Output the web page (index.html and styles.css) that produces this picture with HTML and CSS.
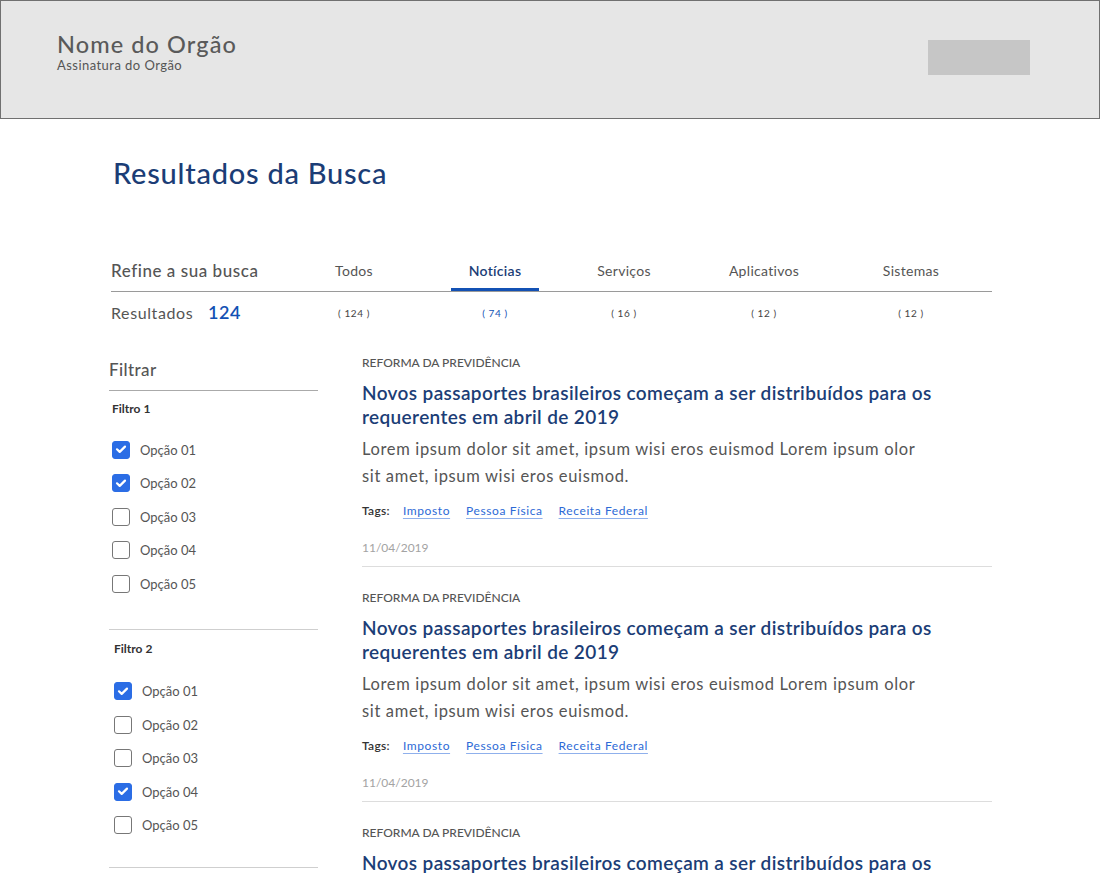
FILE: index.html
```html
<!DOCTYPE html>
<html lang="pt-BR">
<head>
<meta charset="utf-8">
<title>Resultados da Busca</title>
<link rel="stylesheet" href="styles.css">
</head>
<body>
<header class="topbar">
  <div class="brand">
    <div class="brand-name">Nome do Orgão</div>
    <div class="brand-sub">Assinatura do Orgão</div>
  </div>
  <div class="logo-box"></div>
</header>

<main class="page">
  <h1 class="page-title">Resultados da Busca</h1>

  <section class="refine">
    <div class="refine-row refine-head">
      <div class="refine-label">Refine a sua busca</div>
      <div class="tab"><span class="tab-text">Todos</span></div>
      <div class="tab"><span class="tab-text active">Notícias</span></div>
      <div class="tab"><span class="tab-text">Serviços</span></div>
      <div class="tab"><span class="tab-text">Aplicativos</span></div>
      <div class="tab"><span class="tab-text">Sistemas</span></div>
    </div>
    <div class="refine-row refine-counts">
      <div class="results-label">Resultados <span class="results-num">124</span></div>
      <div class="count">( 124 )</div>
      <div class="count active">( 74 )</div>
      <div class="count">( 16 )</div>
      <div class="count">( 12 )</div>
      <div class="count">( 12 )</div>
    </div>
  </section>

  <div class="content">
    <aside class="sidebar">
      <div class="filter-title">Filtrar</div>

      <div class="filter-group">
        <div class="group-title">Filtro 1</div>
        <ul class="options">
          <li class="option"><span class="box checked"><svg viewBox="0 0 18 18"><path d="M5 9.3l2.7 2.6L13 6.6"/></svg></span>Opção 01</li>
          <li class="option"><span class="box checked"><svg viewBox="0 0 18 18"><path d="M5 9.3l2.7 2.6L13 6.6"/></svg></span>Opção 02</li>
          <li class="option"><span class="box"></span>Opção 03</li>
          <li class="option"><span class="box"></span>Opção 04</li>
          <li class="option"><span class="box"></span>Opção 05</li>
        </ul>
      </div>

      <div class="filter-group group-2">
        <div class="group-title">Filtro 2</div>
        <ul class="options">
          <li class="option"><span class="box checked"><svg viewBox="0 0 18 18"><path d="M5 9.3l2.7 2.6L13 6.6"/></svg></span>Opção 01</li>
          <li class="option"><span class="box"></span>Opção 02</li>
          <li class="option"><span class="box"></span>Opção 03</li>
          <li class="option"><span class="box checked"><svg viewBox="0 0 18 18"><path d="M5 9.3l2.7 2.6L13 6.6"/></svg></span>Opção 04</li>
          <li class="option"><span class="box"></span>Opção 05</li>
        </ul>
      </div>
    </aside>

    <section class="results">
      <article class="result">
        <div class="category">REFORMA DA PREVIDÊNCIA</div>
        <h2 class="result-title">Novos passaportes brasileiros começam a ser distribuídos para os requerentes em abril de 2019</h2>
        <p class="result-desc">Lorem ipsum dolor sit amet, ipsum wisi eros euismod Lorem ipsum olor sit amet, ipsum wisi eros euismod.</p>
        <div class="tags"><span class="tags-label">Tags:</span><a class="tag">Imposto</a><a class="tag">Pessoa Física</a><a class="tag">Receita Federal</a></div>
        <div class="date">11/04/2019</div>
      </article>
      <article class="result">
        <div class="category">REFORMA DA PREVIDÊNCIA</div>
        <h2 class="result-title">Novos passaportes brasileiros começam a ser distribuídos para os requerentes em abril de 2019</h2>
        <p class="result-desc">Lorem ipsum dolor sit amet, ipsum wisi eros euismod Lorem ipsum olor sit amet, ipsum wisi eros euismod.</p>
        <div class="tags"><span class="tags-label">Tags:</span><a class="tag">Imposto</a><a class="tag">Pessoa Física</a><a class="tag">Receita Federal</a></div>
        <div class="date">11/04/2019</div>
      </article>
      <article class="result">
        <div class="category">REFORMA DA PREVIDÊNCIA</div>
        <h2 class="result-title">Novos passaportes brasileiros começam a ser distribuídos para os requerentes em abril de 2019</h2>
        <p class="result-desc">Lorem ipsum dolor sit amet, ipsum wisi eros euismod Lorem ipsum olor sit amet, ipsum wisi eros euismod.</p>
      </article>
    </section>
  </div>
</main>
</body>
</html>
```
FILE: styles.css
```css
* { box-sizing: border-box; }
html, body { margin: 0; padding: 0; }
body {
  font-family: Lato, "Open Sans", Arial, sans-serif;
  color: #555;
  background: #fff;
  width: 1100px;
  height: 880px;
  overflow: hidden;
}

.topbar {
  height: 119px;
  background: #e6e6e6;
  border: 1px solid #707070;
  padding: 30px 69px 0 56px;
  display: flex;
  justify-content: space-between;
  align-items: flex-start;
}
.brand-name {
  font-size: 23.5px;
  line-height: 26px;
  font-weight: 500;
  color: #5a5a5a;
  letter-spacing: 1.1px;
}
.brand-sub {
  font-size: 13px;
  line-height: 16px;
  color: #555;
  margin-top: 0;
  letter-spacing: 0.45px;
}
.logo-box {
  width: 102px;
  height: 35px;
  background: #c6c6c6;
  margin-top: 9px;
}

.page {
  padding: 0 108px 0 109px;
}
.page-title {
  margin: 37px 0 0 4px;
  font-size: 29px;
  line-height: 34px;
  font-weight: 500;
  color: #1b3d76;
  letter-spacing: 0.75px;
}

.refine { margin: 69px 0 0 2px; }
.refine-row {
  display: grid;
  grid-template-columns: 179px 128px 154px 104px 176px 118px 22px;
  align-items: end;
}
.refine-head {
  border-bottom: 1px solid #9a9a9a;
}
.refine-label {
  font-size: 17px;
  line-height: 24px;
  font-weight: 500;
  color: #555;
  padding-bottom: 8px;
  letter-spacing: 0.55px;
}
.tab {
  display: flex;
  justify-content: center;
}
.tab-text {
  font-size: 14px;
  line-height: 24px;
  color: #555;
  padding: 0 18px 5px;
  border-bottom: 3px solid transparent;
  margin-bottom: 0;
  letter-spacing: 0.3px;
}
.tab-text.active {
  color: #1b3d76;
  font-weight: 600;
  border-bottom-color: #1351b4;
}
.refine-counts {
  margin-top: 8px;
  align-items: center;
}
.results-label {
  font-size: 16px;
  line-height: 24px;
  color: #555;
  letter-spacing: 0.6px;
}
.results-num {
  font-size: 18px;
  font-weight: 600;
  color: #1351b4;
  margin-left: 10px;
  letter-spacing: 0.6px;
}
.count {
  text-align: center;
  font-size: 10px;
  line-height: 24px;
  color: #444;
  letter-spacing: 0.6px;
}
.count.active { color: #1351b4; }

.content {
  display: grid;
  grid-template-columns: 209px 1fr;
  column-gap: 44px;
  margin-top: 30px;
}

.filter-title {
  font-size: 17px;
  line-height: 24px;
  font-weight: 500;
  color: #555;
  margin-top: 3px;
  padding-bottom: 8px;
  border-bottom: 1px solid #aaa;
  letter-spacing: 0.4px;
}
.filter-group {
  border-bottom: 1px solid #cfcfcf;
  padding: 10px 0 28px 3px;
}
.group-2 { padding: 11px 0 25px 5px; }
.group-title {
  font-size: 12px;
  line-height: 16px;
  font-weight: 700;
  color: #333;
}
.options {
  list-style: none;
  margin: 16px 0 0;
  padding: 0;
}
.group-2 .options { margin-top: 18px; }
.option {
  height: 33.5px;
  display: flex;
  align-items: center;
  font-size: 13px;
  color: #555;
}
.box {
  width: 18px;
  height: 18px;
  border: 1.5px solid #777;
  border-radius: 3px;
  margin-right: 10px;
  flex: none;
  display: flex;
}
.box.checked {
  background: #2b6de5;
  border-color: #2b6de5;
}
.box svg {
  margin: -1.5px;
  width: 18px;
  height: 18px;
  flex: none;
}
.box svg path {
  fill: none;
  stroke: #fff;
  stroke-width: 2.2;
  stroke-linecap: round;
  stroke-linejoin: round;
}

.result {
  padding: 0 0 10px;
  border-bottom: 1px solid #ddd;
  margin-bottom: 23px;
}
.category {
  font-size: 12px;
  line-height: 16px;
  font-weight: 500;
  color: #555;
}
.result-title {
  margin: 10px 0 0;
  font-size: 19px;
  line-height: 24px;
  font-weight: 600;
  color: #1b3d76;
  max-width: 600px;
  letter-spacing: 0.37px;
}
.result-desc {
  margin: 6.5px 0 0;
  font-size: 16.5px;
  line-height: 27px;
  color: #555;
  max-width: 565px;
  letter-spacing: 0.65px;
}
.tags {
  margin-top: 13.5px;
  font-size: 12px;
  line-height: 16px;
  display: flex;
}
.tags-label {
  font-weight: 600;
  color: #333;
  margin-right: 13px;
  letter-spacing: 0.3px;
}
.tag {
  color: #2d6ad6;
  text-decoration: underline;
  text-decoration-color: #8fb0ec;
  text-underline-offset: 3px;
  margin-right: 16px;
  letter-spacing: 0.6px;
}
.date {
  margin-top: 21px;
  font-size: 12px;
  line-height: 16px;
  color: #a3a3a3;
}
```
